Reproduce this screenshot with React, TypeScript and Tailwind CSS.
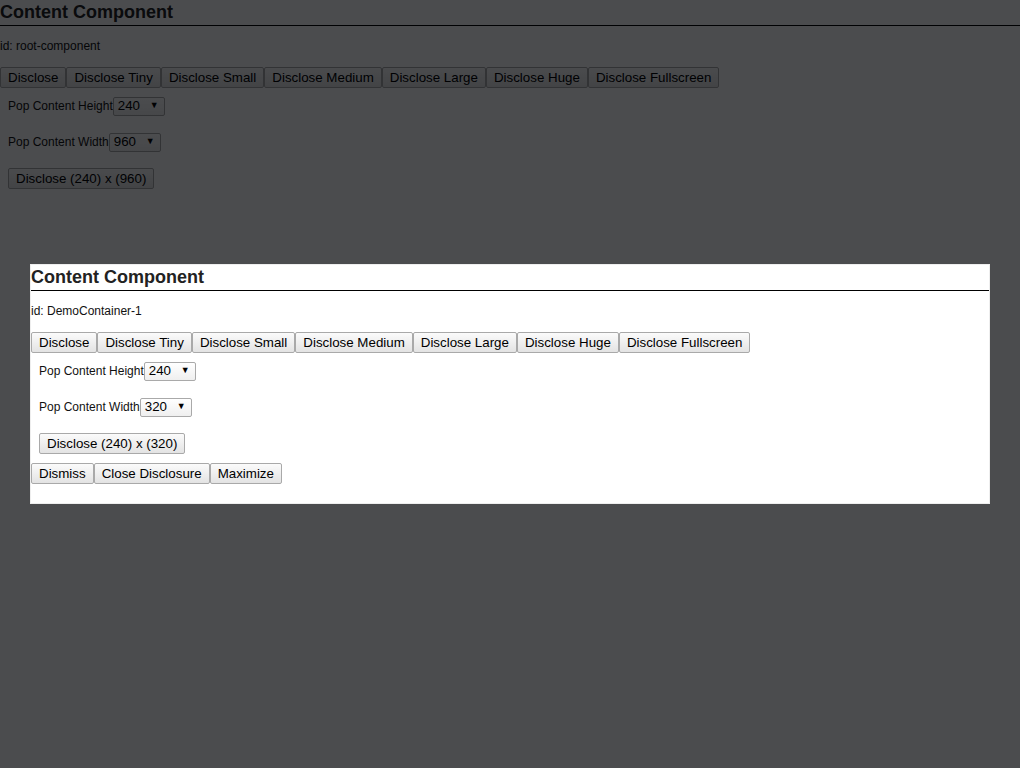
import React from "react";

const btn =
  "h-[21px] px-[7px] py-[2px] border border-[#a9a9a9] rounded-[2px] bg-[linear-gradient(#fbfbfb,#e3e3e3)] text-[13.33px] leading-[15px] text-black whitespace-nowrap";

const sizes = ["Disclose", "Disclose Tiny", "Disclose Small", "Disclose Medium", "Disclose Large", "Disclose Huge", "Disclose Fullscreen"];

const FakeSelect = ({ value, width }: { value: string; width: string }) => (
  <div
    className={`${width} h-[19px] flex items-center justify-between pl-[4px] pr-[5px] border border-[#a9a9a9] rounded-[2px] bg-[linear-gradient(#ffffff,#efefef)] text-[13.33px] text-black`}
  >
    <span>{value}</span>
    <span className="text-[9px]">▼</span>
  </div>
);

interface ContentProps {
  id: string;
  popWidth: string;
  popup?: boolean;
}

const ContentComponent = ({ id, popWidth, popup }: ContentProps) => {
  return (
    <div className="text-[#111]">
      <h3 className="text-[18px] font-bold leading-[21px] pt-[2px] pb-[2px] border-b border-black text-[#222]">
        Content Component
      </h3>
      <p className="text-[12px] leading-[14px] mt-[13px] mb-[14px]">id: {id}</p>
      <div className="flex">
        {sizes.map((s) => (
          <button key={s} className={btn}>
            {s}
          </button>
        ))}
      </div>
      <div className="pt-[8px] pb-[9px] pl-[8px]">
        <div className="flex items-center h-[20px] mb-[16px] text-[12px]">
          <label>Pop Content Height</label>
          <FakeSelect value="240" width="w-[52px]" />
        </div>
        <div className="flex items-center h-[20px] mb-[16px] text-[12px]">
          <label>Pop Content Width</label>
          <FakeSelect value={popWidth} width="w-[52px]" />
        </div>
        <div className="flex">
          <button className={btn}>
            Disclose (240) x ({popWidth})
          </button>
        </div>
      </div>
      {popup && (
        <div className="flex">
          <button className={btn}>Dismiss</button>
          <button className={btn}>Close Disclosure</button>
          <button className={btn}>Maximize</button>
        </div>
      )}
    </div>
  );
};

export default function App() {
  return (
    <div className="min-h-[768px] bg-white font-['Liberation_Sans',Arial,sans-serif]">
      <ContentComponent id="root-component" popWidth="960" />
      <div className="fixed inset-0 bg-[rgba(0,1,4,0.706)] flex items-center justify-center">
        <div className="w-[960px] h-[240px] bg-white border border-[#eeeeee] overflow-hidden">
          <ContentComponent id="DemoContainer-1" popWidth="320" popup />
        </div>
      </div>
    </div>
  );
}
